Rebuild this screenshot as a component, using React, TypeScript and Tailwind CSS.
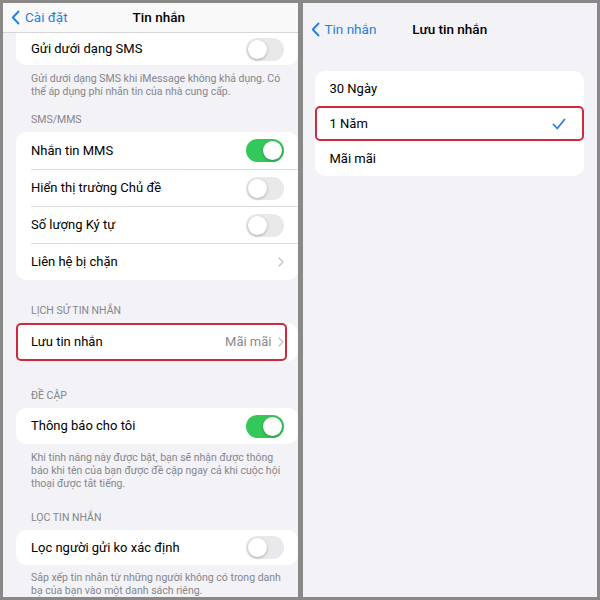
import React from 'react';

const font = { fontFamily: 'Roboto, Inter, "Noto Sans", sans-serif' };

function Toggle({ on }: { on: boolean }) {
  return (
    <span
      className={
        on
          ? 'flex h-[23px] w-[38px] items-center justify-end rounded-full bg-[#34c759] p-[2px]'
          : 'flex h-[23px] w-[38px] items-center justify-start rounded-full bg-[#e9e9eb] p-[2px]'
      }
    >
      <span className="h-[19px] w-[19px] rounded-full bg-white shadow-[0_1px_3px_rgba(0,0,0,0.28)]" />
    </span>
  );
}

function Chevron() {
  return (
    <svg width="6" height="10" viewBox="0 0 6 10" fill="none">
      <path d="M1 1l4 4-4 4" stroke="#c4c4c7" strokeWidth="1.4" strokeLinecap="round" strokeLinejoin="round" />
    </svg>
  );
}

function BackChevron() {
  return (
    <svg width="9" height="15" viewBox="0 0 9 15" fill="none">
      <path d="M7.5 1.5L1.8 7.5l5.7 6" stroke="#2a7de1" strokeWidth="1.9" strokeLinecap="round" strokeLinejoin="round" />
    </svg>
  );
}

function Row({ label, right, first, h }: { label: string; right: React.ReactNode; first?: boolean; h: string }) {
  return (
    <div className={`flex pl-[15px] ${h}`}>
      <div className={`flex flex-1 items-center justify-between pr-[14px] ${first ? '' : 'border-t border-[#dcdce0]'}`}>
        <span className="text-[13px] leading-[16px] text-black">{label}</span>
        {right}
      </div>
    </div>
  );
}

function SectionTitle({ text, mt }: { text: string; mt: string }) {
  return <div className={`${mt} mb-[6px] pl-[28px] text-[10.5px] leading-[13px] text-[#86868b]`}>{text}</div>;
}

function Note({ lines, mt }: { lines: string[]; mt: string }) {
  return (
    <div className={`${mt} pl-[28px] text-[10.5px] leading-[13px] text-[#86868b]`}>
      {lines.map((l) => (
        <div key={l} className="whitespace-nowrap">{l}</div>
      ))}
    </div>
  );
}

function LeftPanel() {
  return (
    <div className="flex flex-1 flex-col overflow-hidden bg-[#f2f2f7]">
      <div className="flex h-[30px] shrink-0 items-center border-b border-[#d6d6d9] bg-[#f9f9f9]">
        <div className="ml-[8px] flex items-center gap-[5px] text-[13.5px] text-[#2a7de1]">
          <BackChevron />
          <span>Cài đặt</span>
        </div>
        <div className="ml-[65px] text-[13.5px] font-medium text-black">Tin nhắn</div>
      </div>

      <div className="ml-[13px] h-[32px] rounded-b-[10px] bg-white">
        <Row label="Gửi dưới dạng SMS" right={<Toggle on={false} />} first h="h-[32px]" />
      </div>
      <Note
        mt="mt-[7px]"
        lines={['Gửi dưới dạng SMS khi iMessage không khả dụng. Có', 'thể áp dụng phí nhắn tin của nhà cung cấp.']}
      />

      <SectionTitle text="SMS/MMS" mt="mt-[15px]" />
      <div className="ml-[13px] rounded-[10px] bg-white">
        <Row label="Nhắn tin MMS" right={<Toggle on />} first h="h-[37px]" />
        <Row label="Hiển thị trường Chủ đề" right={<Toggle on={false} />} h="h-[37px]" />
        <Row label="Số lượng Ký tự" right={<Toggle on={false} />} h="h-[37px]" />
        <Row label="Liên hệ bị chặn" right={<Chevron />} h="h-[37px]" />
      </div>

      <SectionTitle text="LỊCH SỬ TIN NHẮN" mt="mt-[24px]" />
      <div className="relative ml-[13px] rounded-[10px] bg-white">
        <Row
          label="Lưu tin nhắn"
          first
          h="h-[38px]"
          right={
            <span className="flex items-center gap-[6px] text-[13px] text-[#8a8a8e]">
              Mãi mãi
              <Chevron />
            </span>
          }
        />
        <span className="pointer-events-none absolute inset-y-0 left-0 right-[11px] rounded-[5px] border-2 border-[#d2283c]" />
      </div>

      <SectionTitle text="ĐỀ CẬP" mt="mt-[28px]" />
      <div className="ml-[13px] rounded-[10px] bg-white">
        <Row label="Thông báo cho tôi" right={<Toggle on />} first h="h-[36px]" />
      </div>
      <Note
        mt="mt-[7px]"
        lines={[
          'Khi tính năng này được bật, bạn sẽ nhận được thông',
          'báo khi tên của bạn được đề cập ngay cả khi cuộc hội',
          'thoại được tắt tiếng.',
        ]}
      />

      <SectionTitle text="LỌC TIN NHẮN" mt="mt-[21px]" />
      <div className="ml-[13px] rounded-[10px] bg-white">
        <Row label="Lọc người gửi ko xác định" right={<Toggle on={false} />} first h="h-[35px]" />
      </div>
      <Note
        mt="mt-[6px]"
        lines={['Sắp xếp tin nhắn từ những người không có trong danh', 'bạ của bạn vào một danh sách riêng.']}
      />
    </div>
  );
}

function RightPanel() {
  return (
    <div className="flex flex-1 flex-col overflow-hidden bg-[#f2f2f7]">
      <div className="grid h-[52px] grid-cols-[1fr_auto_1fr] items-center">
        <div className="ml-[8px] flex items-center gap-[5px] text-[13.5px] text-[#2a7de1]">
          <BackChevron />
          <span>Tin nhắn</span>
        </div>
        <div className="text-[13.5px] font-medium text-black">Lưu tin nhắn</div>
        <div />
      </div>

      <div className="ml-[12px] mr-[13px] mt-[16px] rounded-[10px] bg-white">
        <div className="flex h-[35px] items-center pl-[15px] text-[13px] text-black">30 Ngày</div>
        <div className="relative flex h-[35px] items-center justify-between pl-[15px] pr-[18px] text-[13px] text-black">
          <span>1 Năm</span>
          <svg width="14" height="12" viewBox="0 0 14 12" fill="none">
            <path d="M1.5 6.5l3.8 4L12.5 1.5" stroke="#2a7de1" strokeWidth="1.8" strokeLinecap="round" strokeLinejoin="round" />
          </svg>
          <span className="pointer-events-none absolute inset-0 rounded-[5px] border-2 border-[#d2283c]" />
        </div>
        <div className="flex h-[35px] items-center pl-[15px] text-[13px] text-black">Mãi mãi</div>
      </div>
    </div>
  );
}

export default function App() {
  return (
    <div className="flex h-[600px] w-[600px] gap-[5px] bg-[#8b8987] p-[3px]" style={font}>
      <LeftPanel />
      <RightPanel />
    </div>
  );
}
